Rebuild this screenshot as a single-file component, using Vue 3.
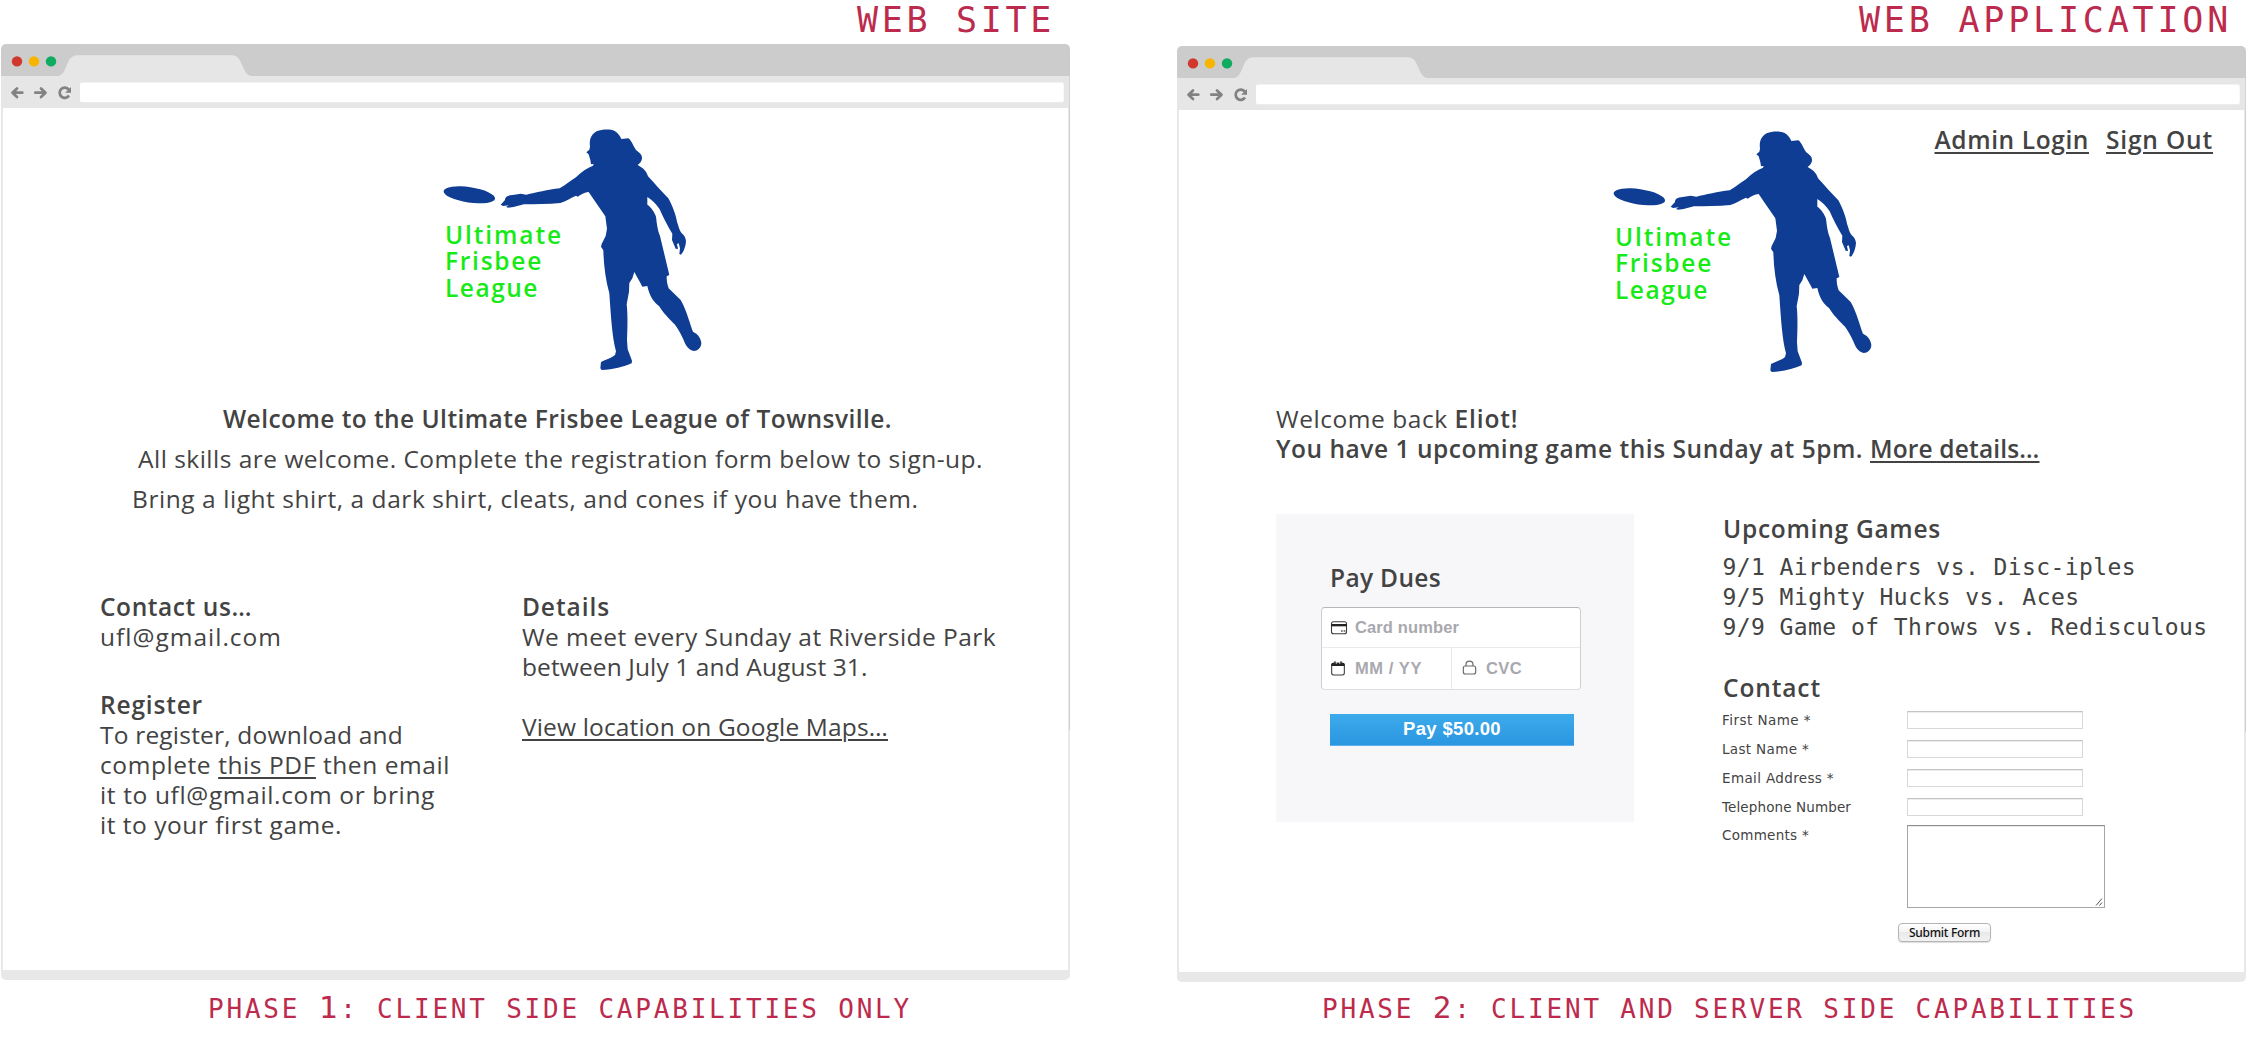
<script setup>
import { h } from 'vue'

// Tracks a line of text out (or in) so that it fills the given measure in pixels.
const vFit = {
  mounted(el, { value }) {
    const natural = el.getBoundingClientRect().width
    el.style.letterSpacing = (value - natural) / el.textContent.length + 'px'
  },
}

const fields = ['First Name *', 'Last Name *', 'Email Address *', 'Telephone Number']
const widths = [89, 87, 112, 129]

const games = [
  ['9/1 Airbenders vs. Disc-iples', 413.5],
  ['9/5 Mighty Hucks vs. Aces', 357],
  ['9/9 Game of Throws vs. Redisculous', 485],
]

const BrowserChrome = () =>
  h('svg', { width: 1069, height: 64, viewBox: '1 44 1069 64' }, [
    h('path', { d: 'M1 76V49a5 5 0 0 1 5-5H1065a5 5 0 0 1 5 5V76Z', fill: '#cccccc' }),
    h('path', { d: 'M1 76H1069V108H1Z', fill: '#e6e6e6' }),
    h('path', { d: 'M1069 76H1070V108H1069Z', fill: '#d2d2d2' }),
    h('path', { d: 'M57 76.200C68 76.200 65 55.200 77 55.200H232C244 55.200 241 76.200 253 76.200Z', fill: '#e6e6e6' }),
    h('circle', { cx: 17, cy: 61.400, r: 5.200, fill: '#d0382e' }),
    h('circle', { cx: 34, cy: 61.400, r: 5.200, fill: '#f7b500' }),
    h('circle', { cx: 51, cy: 61.400, r: 5.200, fill: '#0fab60' }),
    h('g', { fill: 'none', stroke: '#828282', 'stroke-width': 2.700, 'stroke-linecap': 'round', 'stroke-linejoin': 'round' }, [
      h('path', { d: 'M22.300 92.700H12.800M17 88.400L12.500 92.700L17 97' }),
      h('path', { d: 'M35.300 92.700H45M41 88.400L45.500 92.700L41 97' }),
      h('path', { d: 'M68.800 89.600A5.100 5.100 0 1 0 69 95.600', 'stroke-linecap': 'butt' }),
    ]),
    h('path', { d: 'M71 87V92.800H65.200Z', fill: '#828282' }),
    h('rect', { x: 80, y: 82, width: 984, height: 20.600, rx: 2, fill: '#f2f2f2' }),
    h('rect', { x: 80, y: 83, width: 983.500, height: 19, rx: 2, fill: '#fff' }),
  ])

const PlayerFigure = () =>
  h('svg', { width: 300, height: 280, viewBox: '0 0 900 840', fill: '#0f3d94' }, [
    h('ellipse', { cx: 148, cy: 254.500, rx: 78, ry: 23, transform: 'rotate(8.500 148 254.500)' }),
    h('path', {
      d: 'M510 110C507 88 514 73 530 64C548 57 571 57 584 63C595 69 600 78 604 87L625 85C634 91 638 104 648 120C659 128 666 134 666 143C667 153 659 160 653 165C666 172 679 181 684 199C703 219 724 244 745 265C757 287 768 315 771 335C776 350 779 362 784 368C793 375 798 385 798 394C797 408 792 425 783 434L778 432L780 415L776 400L771 402L774 417L767 416L756 390L757 371C743 348 729 321 719 298C708 282 697 270 682 261L682 284C694 292 704 307 708 320C711 345 713 360 720 378L748 495L740 499C740 511 741 522 746 535L782 570C800 600 812 650 819 665C833 671 844 686 844 700C843 714 833 723 821 723C809 721 801 712 795 700C790 685 778 662 765 644C748 628 728 606 717 588C702 578 688 558 682 528L667 530C660 515 650 500 643 486L637 505L628 519L627 545L620 583C624 615 622 660 621 690L623 718L636 752L635 760C611 770 580 779 545 780L541 775L543 756C557 749 575 744 585 735L588 724C577 685 573 625 568 550C557 510 551 465 550 421L543 410L545 402L557 378L561 356L556 319L528 278L506 246C494 247 481 254 473 260L468 257C449 265 439 273 421 279C385 282 346 283 311 283C291 289 280 292 264 293L258 290L267 286L249 288L242 284L255 270C255 261 262 256 278 255L302 251L319 254C347 248 384 239 419 235C438 225 453 210 468 202C484 184 502 174 519 167L521 162L513 163L511 150L506 133L499 127L508 119Z',
    }),
  ])
</script>

<template>
  <main class="stage">
    <section class="panel site">
      <h1 class="heading"><span v-fit="198">WEB SITE</span></h1>
      <div class="window">
        <BrowserChrome />
        <div class="body">
          <div class="logo">
            <PlayerFigure />
            <p class="league">
              <span v-fit="118">Ultimate</span>
              <span v-fit="98">Frisbee</span>
              <span v-fit="94">League</span>
            </p>
          </div>
          <div class="intro">
            <p class="welcome"><b v-fit="669">Welcome to the Ultimate Frisbee League of Townsville.</b></p>
            <p class="skills"><span v-fit="845">All skills are welcome. Complete the registration form below to sign-up.</span></p>
            <p class="bring"><span v-fit="786.500">Bring a light shirt, a dark shirt, cleats, and cones if you have them.</span></p>
          </div>
          <div class="columns">
            <div class="col">
              <p><b v-fit="152">Contact us…</b></p>
              <p><span v-fit="182">ufl@gmail.com</span></p>
              <p class="gap"><b v-fit="103">Register</b></p>
              <p><span v-fit="303">To register, download and</span></p>
              <p><span v-fit="350">complete <a>this PDF</a> then email</span></p>
              <p><span v-fit="335">it to ufl@gmail.com or bring</span></p>
              <p><span v-fit="242">it to your first game.</span></p>
            </div>
            <div class="col">
              <p><b v-fit="88">Details</b></p>
              <p><span v-fit="474">We meet every Sunday at Riverside Park</span></p>
              <p><span v-fit="345.500">between July 1 and August 31.</span></p>
              <p class="map"><a v-fit="366">View location on Google Maps…</a></p>
            </div>
          </div>
        </div>
      </div>
      <p class="caption"><span v-fit="704">PHASE <i>1</i>: CLIENT SIDE CAPABILITIES ONLY</span></p>
    </section>

    <section class="panel app">
      <h1 class="heading"><span v-fit="373">WEB APPLICATION</span></h1>
      <div class="window">
        <BrowserChrome />
        <div class="body">
          <nav class="account">
            <a v-fit="154.500">Admin Login</a>
            <a v-fit="107">Sign Out</a>
          </nav>
          <div class="logo">
            <PlayerFigure />
            <p class="league">
              <span v-fit="118">Ultimate</span>
              <span v-fit="98">Frisbee</span>
              <span v-fit="94">League</span>
            </p>
          </div>
          <div class="greeting">
            <p><span v-fit="178.500">Welcome back </span><b v-fit="64">Eliot!</b></p>
            <p><b v-fit="594">You have 1 upcoming game this Sunday at 5pm. </b><b><a v-fit="169.500">More details…</a></b></p>
          </div>
          <div class="widgets">
            <div class="dues">
              <h2><span v-fit="111">Pay Dues</span></h2>
              <div class="card">
                <div class="cell number">
                  <svg width="18" height="15" viewBox="210 361 54 45">
                    <rect x="214.500" y="366" width="45" height="36" rx="6" fill="none" stroke="#3a3a3a" stroke-width="3.200" />
                    <path d="M214 373H260V380H214Z" fill="#222" />
                    <path d="M243 394H248M251 394H256" stroke="#555" stroke-width="4" />
                  </svg>
                  <span v-fit="104">Card number</span>
                </div>
                <div class="cell expiry">
                  <svg width="18" height="16" viewBox="210 481 54 48">
                    <rect x="215" y="488" width="38" height="35" rx="6" fill="none" stroke="#3a3a3a" stroke-width="3.200" />
                    <path d="M214 496V492Q214 486 220 486H248Q254 486 254 492V496Z" fill="#222" />
                    <path d="M225 482V489M243 482V489" stroke="#333" stroke-width="4" />
                    <path d="M229 485V490M239 485V490" stroke="#fff" stroke-width="2" />
                  </svg>
                  <span v-fit="67">MM / YY</span>
                </div>
                <div class="cell cvc">
                  <svg width="15" height="16" viewBox="607 481 45 48">
                    <rect x="611" y="499" width="37" height="24" rx="6" fill="none" stroke="#6a6a6a" stroke-width="3.500" />
                    <path d="M619 499V495A10.500 10.500 0 0 1 640 495V499" fill="none" stroke="#6a6a6a" stroke-width="3.500" />
                  </svg>
                  <span v-fit="36">CVC</span>
                </div>
              </div>
              <button class="pay"><span v-fit="98">Pay $50.00</span></button>
            </div>
            <div class="side">
              <h2><span v-fit="218">Upcoming Games</span></h2>
              <ul class="games">
                <li v-for="[text, width] in games" :key="text"><span v-fit="width">{{ text }}</span></li>
              </ul>
              <h2><span v-fit="98">Contact</span></h2>
              <form class="form">
                <div v-for="(label, i) in fields" :key="label" class="row">
                  <label><span v-fit="widths[i]">{{ label }}</span></label>
                  <div class="input"></div>
                </div>
                <div class="row comments">
                  <label><span v-fit="87">Comments *</span></label>
                  <div class="area">
                    <svg width="8" height="8" viewBox="0 0 8 8"><path d="M1 7.500L7 .500M4.500 7.500L7 4.500" stroke="#555" fill="none" /></svg>
                  </div>
                </div>
                <button type="button" class="submit"><span v-fit="71">Submit Form</span></button>
              </form>
            </div>
          </div>
        </div>
      </div>
      <p class="caption"><span v-fit="815">PHASE <i>2</i>: CLIENT AND SERVER SIDE CAPABILITIES</span></p>
    </section>
  </main>
</template>

<style scoped>
.stage {
  display: flex;
  width: 2248px;
  height: 1038px;
  overflow: hidden;
  background: #fff;
  color: #434343;
  font: 24.500px/30px "Open Sans", sans-serif;
  white-space: nowrap;
}
p, h1, h2, ul {
  margin: 0;
  padding: 0;
  list-style: none;
}
b, h2 {
  font-weight: 600;
}
h2 {
  padding-left: 1px;
  font-size: 24.500px;
  line-height: 30px;
}
a {
  text-decoration: underline;
  text-decoration-thickness: 2px;
  text-underline-offset: 3px;
}
svg {
  display: block;
  flex: none;
}
.panel {
  display: flex;
  flex-direction: column;
  flex: none;
}
.site {
  width: 1176px;
}
.app {
  width: 1072px;
}
.heading {
  height: 44px;
  padding-left: 857px;
  color: #bc2b4d;
  font: 35px/40px "DejaVu Sans Mono", monospace;
}
.app .heading {
  height: 46px;
  padding-left: 683px;
}
.window {
  width: 1069px;
  height: 935.500px;
  margin-left: 1px;
  display: flex;
  flex-direction: column;
}
.body {
  position: relative;
  flex: 1;
  box-sizing: border-box;
  border: solid #e8e8e8;
  border-width: 0 2px 10.500px;
  border-radius: 0 0 5px 5px;
}
.body::after {
  content: "";
  position: absolute;
  top: 0;
  right: -2px;
  width: 1px;
  height: 622px;
  background: #cecece;
}
.logo {
  display: grid;
  width: 300px;
  height: 280px;
  margin: 2px 0 0 417px;
}
.app .logo {
  margin-left: 411px;
}
.logo > * {
  grid-area: 1 / 1;
}
.league {
  display: flex;
  flex-direction: column;
  align-items: flex-start;
  padding: 111.500px 0 0 25px;
  color: #17ea17;
  font-weight: 600;
  line-height: 26.600px;
}
.intro {
  margin-top: 8.700px;
  line-height: 40px;
}
.welcome {
  padding-left: 220px;
}
.skills {
  padding-left: 135px;
}
.bring {
  padding-left: 129px;
}
.columns {
  display: flex;
  margin: 73px 0 0 97px;
}
.col:first-child {
  width: 422px;
}
.gap {
  margin-top: 38.500px;
}
.map {
  margin-top: 30px;
}
.caption {
  padding: 12px 0 0 208px;
  color: #bc2b4d;
  font: 26px/34px "DejaVu Sans Mono", monospace;
}
.caption i {
  font-size: 31px;
  font-style: normal;
  line-height: 20px;
}
.app .caption {
  padding: 10px 0 0 146px;
}
.account {
  position: absolute;
  top: 14.500px;
  right: 31px;
  display: flex;
  gap: 17px;
  font-weight: 600;
}
.greeting {
  margin: 11.700px 0 0 97px;
}
.greeting span, .greeting b {
  white-space: pre;
}
.widgets {
  display: flex;
  margin: 50px 0 0 97px;
}
.dues {
  display: flex;
  flex-direction: column;
  box-sizing: border-box;
  width: 358px;
  height: 308px;
  padding: 49px 53px 0 45px;
  background: #f7f7f9;
}
.dues h2 {
  padding-left: 9px;
}
.card {
  display: grid;
  grid-template: 40px 1fr / 130px 1fr;
  box-sizing: border-box;
  height: 83px;
  margin-top: 14px;
  border: 1px solid #cfcfcf;
  border-top-color: #b5b5b5;
  border-bottom-color: #dedede;
  border-radius: 4px;
  background: #fff;
  color: #a8a8ae;
  font: bold 16.500px/20px "Liberation Sans", sans-serif;
}
.cell {
  display: flex;
  align-items: center;
  gap: 7px;
  padding-left: 8px;
}
.expiry svg {
  margin-top: 1px;
}
.number {
  grid-column: 1 / 3;
  border-bottom: 1.500px solid #ebebeb;
}
.expiry {
  border-right: 1px solid #e8e8e8;
}
.cvc {
  gap: 9px;
  padding-left: 10px;
}
.pay {
  height: 32px;
  margin: 24px 7px 0 9px;
  padding: 0;
  border: 0;
  border-bottom: 1px solid #5fb0ea;
  background: linear-gradient(#3cabeb, #2b96e1);
  color: #fff;
  font: bold 18.500px/30px "Liberation Sans", sans-serif;
}
.side {
  width: 490px;
  margin-left: 88px;
}
.games {
  margin: 8px 0 31px;
  padding-left: .500px;
  font: 23px/30px "DejaVu Sans Mono", monospace;
}
.form {
  margin-top: 3.200px;
  font: 13.500px/18px "DejaVu Sans", sans-serif;
}
.row {
  display: flex;
  align-items: center;
  height: 28.800px;
}
.row label {
  width: 185px;
}
.input, .area {
  box-sizing: border-box;
  width: 176px;
  height: 18px;
  border: 1px solid #d8d8d8;
  border-top-color: #c4c4c4;
  box-shadow: inset 0 1px #ececec;
}
.comments {
  align-items: flex-start;
  height: 102px;
}
.comments label {
  padding-top: 5px;
}
.area {
  display: flex;
  align-items: flex-end;
  justify-content: flex-end;
  width: 198px;
  height: 83px;
  margin-top: 4px;
  padding: 1px;
  border: 1px solid #a6a6a6;
  border-top-color: #8c8c8c;
}
.submit {
  display: block;
  width: 93px;
  height: 19px;
  margin-left: 176px;
  padding: 0;
  border: 1px solid #b4b4b4;
  border-radius: 4px;
  background: linear-gradient(#fff, #f4f4f4 45%, #e9e9e9 50%, #f2f2f2);
  box-shadow: 0 1px 1px #ddd;
  color: #111;
  font: 500 12px/17px "Noto Sans", sans-serif;
}
</style>

<style>
body {
  margin: 0;
  background: #fff;
}
</style>
